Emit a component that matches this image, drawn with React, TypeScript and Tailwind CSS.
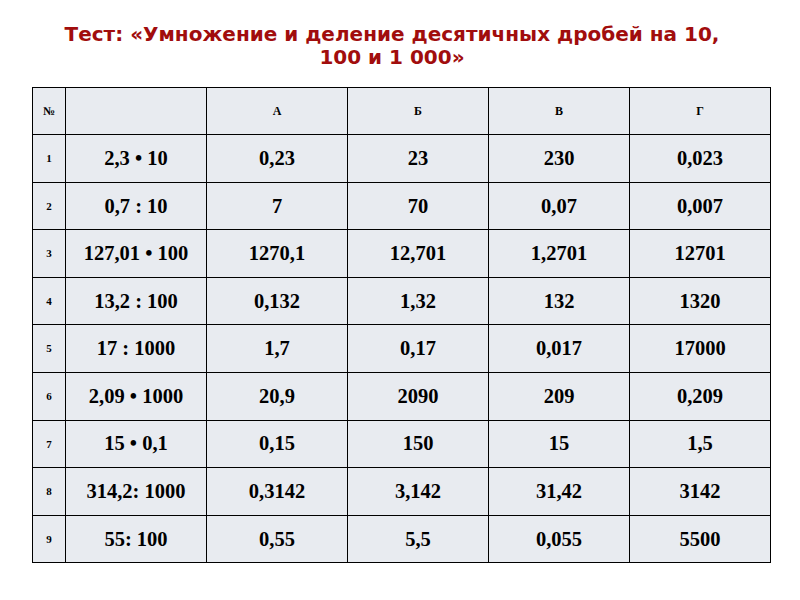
import React from "react";

const rows: string[][] = [
  ["1", "2,3 • 10", "0,23", "23", "230", "0,023"],
  ["2", "0,7 : 10", "7", "70", "0,07", "0,007"],
  ["3", "127,01 • 100", "1270,1", "12,701", "1,2701", "12701"],
  ["4", "13,2 : 100", "0,132", "1,32", "132", "1320"],
  ["5", "17 : 1000", "1,7", "0,17", "0,017", "17000"],
  ["6", "2,09 • 1000", "20,9", "2090", "209", "0,209"],
  ["7", "15 • 0,1", "0,15", "150", "15", "1,5"],
  ["8", "314,2: 1000", "0,3142", "3,142", "31,42", "3142"],
  ["9", "55: 100", "0,55", "5,5", "0,055", "5500"],
];

export default function App() {
  return (
    <div className="w-[800px] h-[600px] bg-white overflow-hidden">
      <h1 className="pt-[23px] pr-[16px] text-center text-[#a10d0d] font-bold text-[20px] leading-[23px] font-['DejaVu_Sans',sans-serif]">
        Тест: «Умножение и деление десятичных дробей на 10,
        <br />
        100 и 1 000»
      </h1>
      <div className="pl-[32px] pt-[18px]">
        <table className="border-collapse font-['Liberation_Serif',serif] font-bold text-black">
          <colgroup>
            <col className="w-[33px]" />
            <col className="w-[141px]" />
            <col className="w-[141px]" />
            <col className="w-[141px]" />
            <col className="w-[141px]" />
            <col className="w-[141px]" />
          </colgroup>
          <thead>
            <tr className="h-[47px] bg-[#e8ebf0]">
              <th className="border border-black text-[12px] text-center">№</th>
              <th className="border border-black"></th>
              <th className="border border-black text-[12px]">А</th>
              <th className="border border-black text-[12px]">Б</th>
              <th className="border border-black text-[12px]">В</th>
              <th className="border border-black text-[12px]">Г</th>
            </tr>
          </thead>
          <tbody>
            {rows.map((r) => (
              <tr key={r[0]} className="h-[47.6px] bg-[#e8ebf0]">
                <td className="border border-black text-[11px] text-center">{r[0]}</td>
                {r.slice(1).map((c, i) => (
                  <td key={i} className="border border-black text-[20.5px] text-center">
                    {c}
                  </td>
                ))}
              </tr>
            ))}
          </tbody>
        </table>
      </div>
    </div>
  );
}
